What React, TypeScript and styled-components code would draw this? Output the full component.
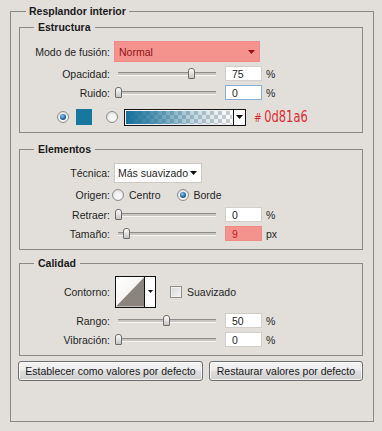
import React from "react";
import styled, { createGlobalStyle } from "styled-components";

const GlobalStyle = createGlobalStyle`
  html, body {
    margin: 0;
    padding: 0;
    background: #e2dfdb;
  }
  body {
    font-family: "Liberation Sans", Arial, sans-serif;
    font-size: 10.5px;
    color: #1f1f1f;
  }
`;

const Page = styled.div`
  width: 382px;
  height: 431px;
  box-sizing: border-box;
  padding: 5px 0 0 10px;
  background: #e2dfdb;
`;

const Group = styled.fieldset<{ $outer?: boolean; $mt?: number; $pb?: number }>`
  margin: ${(p) => p.$mt ?? 0}px 0 0 0;
  min-width: 0;
  box-sizing: border-box;
  border: 1px solid #8b8986;
  width: ${(p) => (p.$outer ? 364 : 344)}px;
  padding: ${(p) => (p.$outer ? "3px 10px 40px 8px" : `0 0 ${p.$pb ?? 6}px 0`)};

  > legend {
    font-weight: bold;
    line-height: 13px;
    color: #1a1a1a;
    padding: 0 ${(p) => (p.$outer ? 3 : 4)}px;
    margin-left: ${(p) => (p.$outer ? 7 : 14)}px;
  }
`;

const Row = styled.div<{ $h: number; $mt: number; $pl?: number }>`
  display: flex;
  align-items: center;
  height: ${(p) => p.$h}px;
  margin-top: ${(p) => p.$mt}px;
  padding-left: ${(p) => p.$pl ?? 0}px;
`;

const Label = styled.span`
  width: 90px;
  flex: none;
  text-align: right;
  white-space: nowrap;
`;

const Select = styled.div<{ $w: number; $h: number; $hot?: boolean }>`
  box-sizing: border-box;
  width: ${(p) => p.$w}px;
  height: ${(p) => p.$h}px;
  margin-left: 4px;
  display: flex;
  align-items: center;
  justify-content: space-between;
  padding: 0 4px 0 ${(p) => (p.$hot ? 4 : 3)}px;
  white-space: nowrap;
  background: ${(p) => (p.$hot ? "#f4928d" : "#ffffff")};
  border: 1px solid ${(p) => (p.$hot ? "#f08a86" : "#cdcac6")};
  color: ${(p) => (p.$hot ? "#8e1414" : "#1f1f1f")};

  svg {
    flex: none;
    display: block;
  }
`;

const SliderBox = styled.div`
  position: relative;
  width: 108px;
  height: 15px;
  margin-left: 4px;
  flex: none;
`;

const Track = styled.div`
  position: absolute;
  left: 4px;
  width: 98px;
  top: 6px;
  height: 2px;
  background: #c9c6c2;
  border-top: 1px solid #8f8d8a;
  border-bottom: 1px solid #f6f5f3;
`;

const Thumb = styled.div`
  position: absolute;
  top: 2px;
  width: 7px;
  height: 11px;
  box-sizing: border-box;
  border: 1px solid #6d6c6a;
  border-radius: 3px 3px 1px 1px;
  background: linear-gradient(#fbfbfb, #dcdcdc 60%, #c4c4c4);
`;

const NumBox = styled.div<{ $hot?: boolean; $focus?: boolean }>`
  box-sizing: border-box;
  width: 37px;
  height: 15px;
  margin-left: 3px;
  padding-left: 6px;
  display: flex;
  align-items: center;
  background: ${(p) => (p.$hot ? "#f4928d" : "#ffffff")};
  border: 1px solid
    ${(p) => (p.$hot ? "#f08a86" : p.$focus ? "#8aaed6" : "#d2cfcb")};
  color: ${(p) => (p.$hot ? "#c41f1f" : "#1f1f1f")};
`;

const Unit = styled.span`
  margin-left: 4px;
`;

const Radio = styled.span<{ $on?: boolean; $ml?: number }>`
  position: relative;
  flex: none;
  width: 12px;
  height: 12px;
  margin-left: ${(p) => p.$ml ?? 0}px;
  box-sizing: border-box;
  border-radius: 50%;
  border: 1px solid #8e8e8e;
  background: radial-gradient(circle at 55% 60%, #f6f6f6 0 35%, #cfcfcf 100%);

  &::after {
    content: "";
    display: ${(p) => (p.$on ? "block" : "none")};
    position: absolute;
    inset: 2px;
    border-radius: 50%;
    background: radial-gradient(circle at 40% 35%, #8cc8f2, #1e5f97 60%, #0c345a);
  }
`;

const RadioText = styled.span`
  margin-left: 5px;
`;

const Swatch = styled.span`
  flex: none;
  width: 16px;
  height: 16px;
  margin-left: 7px;
  background: #17789f;
`;

const GradientPick = styled.div`
  flex: none;
  display: flex;
  box-sizing: border-box;
  width: 122px;
  height: 17px;
  margin-left: 6px;
  border: 1px solid #141414;
`;

const GradientFill = styled.div`
  flex: 1;
  border: 1px solid #f3f3f3;
  background: linear-gradient(
      to right,
      #16709a 0%,
      rgba(22, 112, 154, 0.75) 25%,
      rgba(22, 112, 154, 0.25) 65%,
      rgba(22, 112, 154, 0) 100%
    ),
    conic-gradient(#cdcdcd 25%, #ffffff 0 50%, #cdcdcd 0 75%, #ffffff 0) 0 0 / 8px 8px;
`;

const ArrowCell = styled.div`
  flex: none;
  width: 11px;
  display: flex;
  align-items: center;
  justify-content: center;
  background: #fff;
  border-left: 1px solid #141414;
`;

const HexNote = styled.span`
  display: inline-block;
  margin-left: 8px;
  font-family: "Liberation Sans Narrow", "DejaVu Sans Condensed", "Liberation Sans", sans-serif;
  font-size: 15px;
  color: #dd2a30;
  white-space: nowrap;
  transform: scaleX(0.85);
  transform-origin: left center;

  b {
    font-weight: normal;
    font-size: 12px;
    margin-right: 3px;
  }
`;

const ContourBox = styled.div`
  display: flex;
  box-sizing: border-box;
  width: 41px;
  height: 32px;
  margin-left: 5px;
  border: 1px solid #111;
  background: #fff;
`;

const ContourArrow = styled.div`
  flex: none;
  width: 10px;
  display: flex;
  align-items: center;
  justify-content: center;
  border-left: 1px solid #111;
`;

const Check = styled.span`
  flex: none;
  width: 12px;
  height: 12px;
  box-sizing: border-box;
  margin-left: 14px;
  border: 1px solid #8e8e8e;
  background: linear-gradient(135deg, #d8d8d8, #f4f4f4);
  box-shadow: inset 0 0 0 1px #eeeeee;
`;

const ButtonRow = styled.div`
  display: flex;
  gap: 6px;
  margin: 5px 0 0 -1px;
`;

const Btn = styled.button<{ $w: number }>`
  width: ${(p) => p.$w}px;
  height: 20px;
  padding: 0;
  border: 1px solid #6f6f6f;
  border-radius: 3px;
  background: linear-gradient(#f4f4f4, #ececec 45%, #dedede 50%, #cfcfcf);
  box-shadow: inset 0 0 0 1px rgba(255, 255, 255, 0.75);
  font: 10.5px "Liberation Sans", Arial, sans-serif;
  color: #1a1a1a;
`;

const Tri = ({ color }: { color: string }) => (
  <svg width="7" height="4" viewBox="0 0 7 4">
    <polygon points="0,0 7,0 3.5,4" fill={color} />
  </svg>
);

const Slider = ({ pct }: { pct: number }) => (
  <SliderBox>
    <Track />
    <Thumb style={{ left: `${4 + pct * 98 - 3.5}px` }} />
  </SliderBox>
);

const SliderRow = ({
  label,
  pct,
  value,
  unit,
  mt,
  hot,
  focus,
}: {
  label: string;
  pct: number;
  value: string;
  unit: string;
  mt: number;
  hot?: boolean;
  focus?: boolean;
}) => (
  <Row $h={15} $mt={mt}>
    <Label>{label}</Label>
    <Slider pct={pct} />
    <NumBox $hot={hot} $focus={focus}>
      {value}
    </NumBox>
    <Unit>{unit}</Unit>
  </Row>
);

export default function App() {
  return (
    <Page>
      <GlobalStyle />
      <Group $outer>
        <legend>Resplandor interior</legend>

        <Group $pb={6}>
          <legend>Estructura</legend>
          <Row $h={21} $mt={7}>
            <Label>Modo de fusión:</Label>
            <Select $w={146} $h={21} $hot>
              <span>Normal</span>
              <Tri color="#9a1010" />
            </Select>
          </Row>
          <SliderRow label="Opacidad:" pct={0.755} value="75" unit="%" mt={4} />
          <SliderRow label="Ruido:" pct={0} value="0" unit="%" mt={4} focus />
          <Row $h={18} $mt={8} $pl={37}>
            <Radio $on />
            <Swatch />
            <Radio $ml={14} />
            <GradientPick>
              <GradientFill />
              <ArrowCell>
                <Tri color="#111" />
              </ArrowCell>
            </GradientPick>
            <HexNote>
              <b>#</b>0d81a6
            </HexNote>
          </Row>
        </Group>

        <Group $mt={10} $pb={8}>
          <legend>Elementos</legend>
          <Row $h={20} $mt={7}>
            <Label>Técnica:</Label>
            <Select $w={88} $h={20}>
              <span>Más suavizado</span>
              <Tri color="#111" />
            </Select>
          </Row>
          <Row $h={15} $mt={4}>
            <Label>Origen:</Label>
            <Radio $ml={2} />
            <RadioText>Centro</RadioText>
            <Radio $ml={16} $on />
            <RadioText>Borde</RadioText>
          </Row>
          <SliderRow label="Retraer:" pct={0} value="0" unit="%" mt={5} />
          <SliderRow label="Tamaño:" pct={0.09} value="9" unit="px" mt={4} hot />
        </Group>

        <Group $mt={7} $pb={8}>
          <legend>Calidad</legend>
          <Row $h={31} $mt={6}>
            <Label>Contorno:</Label>
            <ContourBox>
              <svg width="29" height="30" viewBox="0 0 29 30">
                <defs>
                  <linearGradient id="cg" x1="0" y1="0" x2="1" y2="1">
                    <stop offset="0" stopColor="#ffffff" />
                    <stop offset="1" stopColor="#ece9e7" />
                  </linearGradient>
                </defs>
                <rect x="0" y="0" width="29" height="30" fill="url(#cg)" />
                <polygon points="0,30 29,0 29,30" fill="#8b837e" />
              </svg>
              <ContourArrow>
                <svg width="5" height="3" viewBox="0 0 5 3">
                  <polygon points="0,0 5,0 2.5,3" fill="#111" />
                </svg>
              </ContourArrow>
            </ContourBox>
            <Check />
            <RadioText>Suavizado</RadioText>
          </Row>
          <SliderRow label="Rango:" pct={0.49} value="50" unit="%" mt={6} />
          <SliderRow label="Vibración:" pct={0} value="0" unit="%" mt={4} />
        </Group>

        <ButtonRow>
          <Btn $w={186}>Establecer como valores por defecto</Btn>
          <Btn $w={155}>Restaurar valores por defecto</Btn>
        </ButtonRow>
      </Group>
    </Page>
  );
}
